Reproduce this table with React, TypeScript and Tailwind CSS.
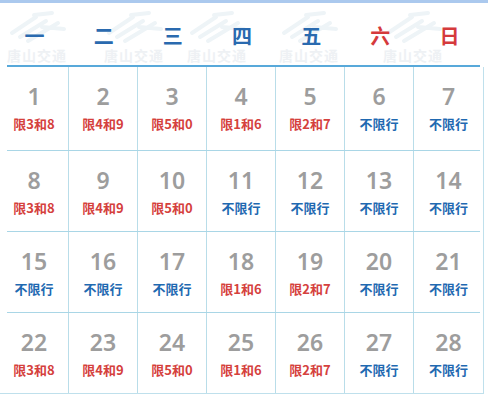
const days = ["一", "二", "三", "四", "五", "六", "日"];

type Day = { n: number; label: string };

// plate-number limits by date; everything else is unrestricted
const limits: Record<number, string> = {
  1: "限3和8", 2: "限4和9", 3: "限5和0", 4: "限1和6", 5: "限2和7",
  8: "限3和8", 9: "限4和9", 10: "限5和0",
  18: "限1和6", 19: "限2和7",
  22: "限3和8", 23: "限4和9", 24: "限5和0", 25: "限1和6", 26: "限2和7",
};

const weeks: Day[][] = [0, 1, 2, 3].map((w) =>
  Array.from({ length: 7 }, (_, i) => {
    const n = w * 7 + i + 1;
    return { n, label: limits[n] ?? "不限行" };
  })
);

const marks = [6, 103, 186, 278, 382];

function Watermark({ x }: { x: number }) {
  return (
    <div className="absolute top-[6px] flex flex-col items-center" style={{ left: x }}>
      <svg width="62" height="36" viewBox="0 0 62 36">
        <path
          d="M6 24 L30 8 M14 28 L40 12 M22 32 L52 14 M28 6 L46 4 M36 18 L58 20"
          stroke="#eef4f7"
          strokeWidth="4"
          fill="none"
          strokeLinecap="round"
        />
      </svg>
      <span
        className="mt-[3px] text-[14px] leading-none text-[#eef1f4] font-bold tracking-[1px]"
        style={{ fontFamily: '"Noto Sans CJK SC", sans-serif' }}
      >
        唐山交通
      </span>
    </div>
  );
}

export default function App() {
  return (
    <div
      className="relative h-[396px] w-[488px] overflow-hidden bg-white border-t-[3px] border-[#abc9ee]"
      style={{ fontFamily: '"Noto Sans", "Noto Sans CJK SC", sans-serif' }}
    >
      <div className="relative h-[62px]">
        {marks.map((x) => (
          <Watermark key={x} x={x} />
        ))}
        <div className="relative grid w-[484px] grid-cols-7 pt-[23px]">
          {days.map((d, i) => (
            <div
              key={d}
              className={`text-center text-[20px] font-bold leading-[20px] ${i >= 5 ? "text-[#d53a3c]" : "text-[#2a6aaf]"}`}
              style={{ fontFamily: '"Noto Sans CJK SC", sans-serif' }}
            >
              {d}
            </div>
          ))}
        </div>
      </div>
      <div className="mx-[7px] h-[2px] w-[473px] bg-[#58a9da]" />
      <div className="w-[484px] border-r border-b border-[#bfe0ec]">
        {weeks.map((week, wi) => (
          <div key={wi}>
            <div className={`grid grid-cols-7 ${wi === 0 ? "h-[83px]" : "h-[80px]"}`}>
              {week.map((d, i) => (
                <div
                  key={d.n}
                  className={`flex flex-col items-center pt-[14px] ${i < 6 ? "border-r border-[#b9dde9]" : ""}`}
                >
                  <span className="text-[23px] font-semibold leading-[30px] text-[#9d9d9d]">{d.n}</span>
                  <span
                    className={`mt-[6px] text-[13px] font-bold leading-none ${d.label === "不限行" ? "text-[#1f69b1]" : "text-[#d5413d]"}`}
                    style={{ fontFamily: '"Noto Sans CJK SC", sans-serif' }}
                  >
                    {d.label}
                  </span>
                </div>
              ))}
            </div>
            {wi < 3 && <div className="mx-[7px] h-px w-[473px] bg-[#a9d6e6]" />}
          </div>
        ))}
      </div>
    </div>
  );
}
